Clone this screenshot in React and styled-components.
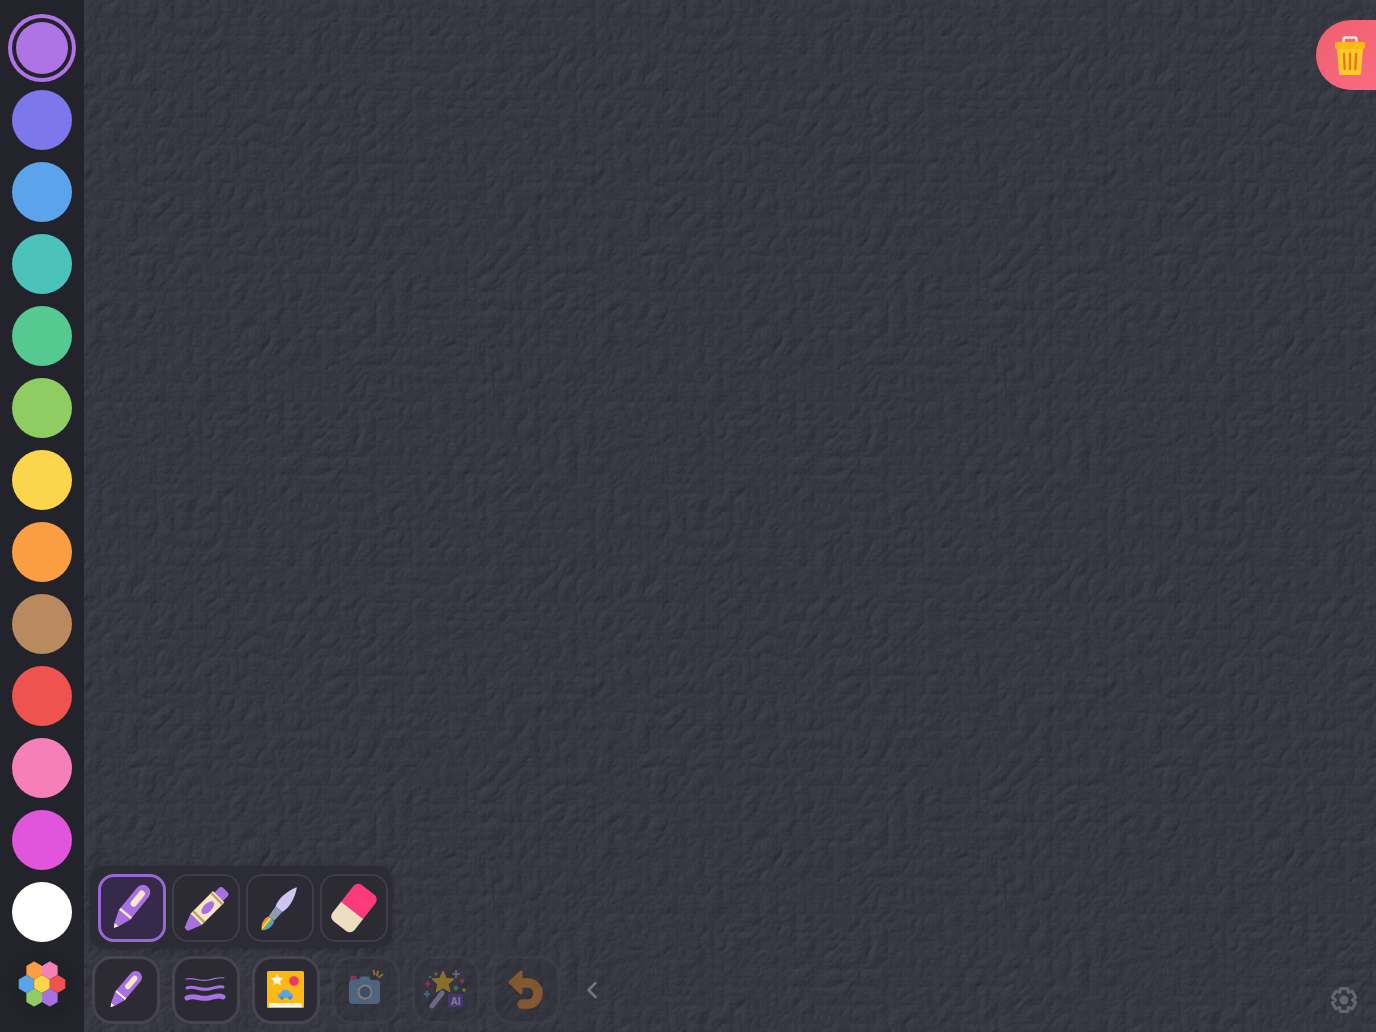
import styled, { createGlobalStyle } from "styled-components";
import { ChevronLeft } from "lucide-react";

const paper = `<svg xmlns='http://www.w3.org/2000/svg' width='512' height='512'><filter id='p' x='0' y='0' width='100%' height='100%' color-interpolation-filters='sRGB'><feTurbulence type='turbulence' baseFrequency='0.055' numOctaves='5' seed='9' stitchTiles='stitch'/><feDiffuseLighting surfaceScale='0.62' diffuseConstant='1' lighting-color='#fff'><feDistantLight azimuth='225' elevation='60'/></feDiffuseLighting><feColorMatrix type='matrix' values='0.5 0 0 0 -0.216 0 0.5 0 0 -0.214 0 0 0.5 0 -0.174 0 0 0 0 1'/></filter><rect width='512' height='512' filter='url(#p)'/></svg>`;

const GlobalStyle = createGlobalStyle`
  html, body {
    margin: 0;
    height: 100%;
    overflow: hidden;
    font-family: "Liberation Sans", Arial, sans-serif;
  }
`;

const Page = styled.div`
  display: flex;
  width: 100vw;
  height: 100vh;
  background: #23232b;
`;

const Sidebar = styled.aside`
  flex: 0 0 84px;
  display: flex;
  flex-direction: column;
  align-items: center;
  gap: 12px;
  padding-top: 18px;
  box-sizing: border-box;
  background: #23232b;
`;

const Swatch = styled.button`
  flex: 0 0 auto;
  width: ${(p) => (p.$selected ? "52px" : "60px")};
  height: ${(p) => (p.$selected ? "52px" : "60px")};
  margin: ${(p) => (p.$selected ? "4px" : "0")};
  padding: 0;
  border: none;
  border-radius: 50%;
  background: ${(p) => p.$color};
  box-shadow: ${(p) =>
    p.$selected ? `0 0 0 4px #23232b, 0 0 0 8px ${p.$color}` : "none"};
`;

const PaletteButton = styled.button`
  flex: 0 0 auto;
  display: flex;
  align-items: center;
  justify-content: center;
  width: 60px;
  height: 60px;
  padding: 0;
  border: none;
  border-radius: 50%;
  background: #212128;
  box-shadow: 0 2px 8px rgba(0, 0, 0, 0.12);
`;

const Canvas = styled.main`
  position: relative;
  flex: 1;
  background-color: #36363f;
  background-image: url("data:image/svg+xml,${encodeURIComponent(paper)}");
`;

const TrashButton = styled.button`
  position: absolute;
  top: 20px;
  right: 0;
  display: flex;
  align-items: center;
  justify-content: flex-end;
  width: 60px;
  height: 70px;
  padding: 0 10px 0 0;
  border: none;
  border-radius: 35px 0 0 35px;
  background: linear-gradient(135deg, #ee5f6f, #fb6b80);
`;

const SettingsButton = styled.button`
  position: absolute;
  right: 18px;
  bottom: 18px;
  display: flex;
  width: 28px;
  height: 28px;
  padding: 0;
  border: none;
  background: none;
  color: #62646f;
`;

const Dock = styled.div`
  position: absolute;
  left: 8px;
  bottom: 8px;
  display: flex;
  flex-direction: column;
  align-items: flex-start;
  gap: 8px;
`;

const IconButton = styled.button`
  display: flex;
  width: 68px;
  height: 68px;
  box-sizing: border-box;
  padding: 0;
  border-radius: 16px;
  border: ${(p) => (p.$active ? "3px solid #9a68d4" : "2px solid #3e3d48")};
  background: ${(p) => (p.$active ? "#352a4a" : "#2c2b34")};

  svg {
    flex: none;
    margin: ${(p) => (p.$active ? "-3px" : "-2px")};
  }
`;

const ActionButton = styled(IconButton)`
  border: 3px solid ${(p) => (p.$disabled ? "rgba(72, 72, 86, 0.45)" : "#45444f")};
  border-radius: 20px;
  background: ${(p) => (p.$disabled ? "rgba(46, 45, 54, 0.3)" : "#2c2b34")};

  svg {
    margin: -3px;
    opacity: ${(p) => (p.$disabled ? 0.42 : 1)};
  }
`;

const ToolPanel = styled.div`
  display: flex;
  gap: 6px;
  margin-left: -2px;
  padding: 8px 4px 6px 8px;
  border-radius: 14px;
  background: #2c2c35;
  box-shadow: 0 2px 8px rgba(0, 0, 0, 0.2);
`;

const ActionRow = styled.div`
  display: flex;
  align-items: center;
  gap: 12px;
`;

const CollapseButton = styled.button`
  display: flex;
  margin-left: 6px;
  padding: 0;
  border: none;
  background: none;
  color: #72747f;
`;

const Art = styled.svg.attrs({ width: 68, height: 68, viewBox: "0 0 68 68" })``;

const AiLabel = styled.text`
  font-family: "Liberation Sans", Arial, sans-serif;
  font-size: 10px;
  font-weight: 700;
  fill: #e6ddf8;
`;

function PenIcon({ x, y, scale, angle }) {
  return (
    <Art>
      <g transform={`translate(${x} ${y}) rotate(${angle}) scale(${scale})`}>
        <path d="M-7.500 -19.500a7.500 7.500 0 0 1 15 0V8H-7.500z" fill="#a970e2" />
        <rect x="-3.200" y="-21" width="6.400" height="19" rx="3.200" fill="#fbe8cf" />
        <rect x="-7.500" y="6.500" width="15" height="2.800" fill="#fbe8cf" />
        <path d="M-7.500 9.300H7.500L2.800 22H-2.800z" fill="#a970e2" />
        <path d="M-2.800 22H2.800L0 26.500z" fill="#fbe8cf" />
      </g>
    </Art>
  );
}

function CrayonIcon() {
  return (
    <Art>
      <g transform="translate(34 35.5) rotate(45)">
        <path d="M-6 -24a3 3 0 0 1 3 -3.5h6a3 3 0 0 1 3 3.5V-17H-6z" fill="#a970e2" />
        <rect x="-8" y="-18" width="16" height="32" fill="#f6e6bf" />
        <rect x="-8" y="-16.500" width="16" height="2.4" fill="#b9a36a" />
        <rect x="-8" y="9" width="16" height="2.4" fill="#b9a36a" />
        <ellipse cx="0" cy="-2.500" rx="4.200" ry="8" fill="#a970e2" />
        <path d="M-8 14H8L2.500 27.500Q0 29 -2.500 27.500z" fill="#a970e2" />
      </g>
    </Art>
  );
}

function BrushIcon() {
  const stripes = ["#e95050", "#f6993a", "#fbd64d", "#62bf6b", "#4aa3e8", "#9a68d4"];
  return (
    <Art>
      <defs>
        <clipPath id="bristles">
          <path d="M-3.500 13H3.500C6.500 17 5 24 0 28C-5 24 -6.500 17 -3.500 13z" />
        </clipPath>
      </defs>
      <g transform="translate(33.5 34.5) rotate(39)">
        <path d="M0 -27.5C3 -23 6 -14 5.800 -7C5.700 -3 5 -1 4.300 1H-4.300C-5 -1 -5.700 -3 -5.800 -7C-6 -14 -3 -23 0 -27.5z" fill="#cfc4f2" />
        <path d="M-4.300 1H4.300L3.500 13H-3.500z" fill="#8f9bb5" />
        <g clipPath="url(#bristles)">
          {stripes.map((color, i) => (
            <rect key={color} x={-6.5 + i * 2.2} y="12" width="2.3" height="17" fill={color} />
          ))}
        </g>
      </g>
    </Art>
  );
}

function EraserIcon() {
  return (
    <Art>
      <g transform="translate(34 34) rotate(38)">
        <path d="M-14 3V-17a6 6 0 0 1 6 -6H8a6 6 0 0 1 6 6V3z" fill="#fb3a7c" />
        <path d="M-14 3H14V17a6 6 0 0 1 -6 6H-8a6 6 0 0 1 -6 -6z" fill="#ecdcc0" />
      </g>
    </Art>
  );
}

function WavesIcon() {
  return (
    <Art fill="none" stroke="#a970e2" strokeLinecap="round">
      <path d="M14 23C22 21 28 26 37 24S47 21 52 22" strokeWidth="1.2" />
      <path d="M15 32C22 29 28 35 37 33S47 30 51 31" strokeWidth="3" />
      <path d="M15 42C22 38 28 44 37 42S47 39 51 41" strokeWidth="5" />
    </Art>
  );
}

function StickerIcon() {
  return (
    <Art>
      <rect x="15" y="15" width="37" height="37" rx="1.5" fill="#fdb813" />
      <path
        d="M25 17.5l1.9 3.9 4.3.6-3.1 3 .8 4.3-3.900-2-3.900 2 .8-4.300-3.100-3 4.300-.6z"
        fill="#fdf3d2"
      />
      <circle cx="42" cy="25" r="4.8" fill="#f0356e" />
      <path
        d="M27.500 42c-1.500 0-2-1.200-1.600-2.500.4-1.300 1.600-2.200 3.100-2.700.8-2.500 2.500-3.300 4.500-3.300s3.700.8 4.500 3.300c1.500.5 2.700 1.400 3.100 2.700.4 1.300-.1 2.500-1.600 2.500z"
        fill="#5aa6ee"
      />
      <circle cx="30" cy="42" r="1.800" fill="#3f86cf" />
      <circle cx="38" cy="42" r="1.800" fill="#3f86cf" />
      <rect x="17" y="47" width="33" height="4" rx="1" fill="#fff5dc" />
    </Art>
  );
}

function CameraIcon() {
  return (
    <Art>
      <rect x="18" y="20" width="7" height="5" rx="1.5" fill="#f0356e" />
      <path d="M17 28a4 4 0 0 1 4 -4h3l3-1 2-2.500h8l2 3.500h5a4 4 0 0 1 4 4v16a4 4 0 0 1 -4 4H21a4 4 0 0 1 -4 -4z" fill="#6fa8dc" />
      <circle cx="33" cy="36" r="6.500" fill="#4a6fa5" stroke="#f6d9a8" strokeWidth="2" />
      <g stroke="#fdc413" strokeWidth="2" strokeLinecap="round">
        <path d="M41.500 14.500l1 4" />
        <path d="M46 15.500l-1 4" />
        <path d="M50.500 18.500l-3.500 2.500" />
      </g>
    </Art>
  );
}

function WandIcon() {
  return (
    <Art>
      <path d="M30 37L20 50" stroke="#c3a7ee" strokeWidth="5" strokeLinecap="round" />
      <path
        d="M31 15l3.200 7.200 7.800.8-5.800 5.200 1.700 7.700-6.900-4-6.900 4 1.700-7.700-5.800-5.200 7.800-.8z"
        fill="#fdc413"
        stroke="#fdc413"
        strokeLinejoin="round"
      />
      <rect x="36" y="38" width="15" height="13" rx="1" fill="#5b3fb0" />
      <AiLabel x="43.500" y="48.500" textAnchor="middle">
        AI
      </AiLabel>
      <path d="M44 14v8M40 18h8" stroke="#c3a7ee" strokeWidth="1.500" />
      <path d="M16 25v6M13 28h6" stroke="#f0356e" strokeWidth="2" />
      <path d="M15 35v6M12 38h6" stroke="#4aa3e8" strokeWidth="2" />
      <circle cx="24" cy="18" r="1.800" fill="#8c8fa6" />
      <circle cx="18" cy="21" r="1.300" fill="#4aa3e8" />
      <circle cx="50" cy="25" r="2.200" fill="#f0356e" />
      <path d="M44 29l3 3-3 3-3-3z" fill="#35c26b" />
      <circle cx="52" cy="34" r="1.800" fill="#fdc413" />
    </Art>
  );
}

function UndoIcon() {
  return (
    <Art>
      <path d="M28 27H36a10 10.500 0 0 1 0 21H30" fill="none" stroke="#f08a1d" strokeWidth="9.500" strokeLinecap="round" />
      <path d="M18 26L29 16V37z" fill="#f08a1d" stroke="#f08a1d" strokeWidth="3" strokeLinejoin="round" />
    </Art>
  );
}

function TrashIcon() {
  return (
    <svg width="32" height="40" viewBox="0 0 32 40">
      <path d="M9.500 7V4.500a2 2 0 0 1 2 -2h9a2 2 0 0 1 2 2V7" fill="none" stroke="#f6e8df" strokeWidth="2.500" />
      <rect x="1" y="7" width="30" height="7" rx="1.500" fill="#fdb813" />
      <path d="M3 14H29L27 38a2 2 0 0 1 -2 2H7a2 2 0 0 1 -2 -2z" fill="#fdc82f" />
      <g stroke="#e07b16" strokeWidth="2.400" strokeLinecap="round">
        <path d="M10 19L10.700 34" />
        <path d="M16 19V34" />
        <path d="M22 19L21.300 34" />
      </g>
    </svg>
  );
}

const hexagons = [
  { dx: -7.8, dy: -13.6, color: "#fb9d42" },
  { dx: 7.8, dy: -13.6, color: "#f67fb8" },
  { dx: -15.5, dy: 0, color: "#5ba4ec" },
  { dx: 0, dy: 0, color: "#fbd64d" },
  { dx: 15.5, dy: 0, color: "#ef5350" },
  { dx: -7.8, dy: 13.6, color: "#8fcd63" },
  { dx: 7.8, dy: 13.6, color: "#a970e2" },
];

function HexPalette() {
  return (
    <svg width="60" height="60" viewBox="-30 -30 60 60">
      {hexagons.map((h) => (
        <path
          key={h.color}
          transform={`translate(${h.dx} ${h.dy})`}
          d="M0 -8.500L7.300 -4.300V4.300L0 8.500L-7.300 4.300V-4.300z"
          fill={h.color}
          stroke={h.color}
          strokeLinejoin="round"
        />
      ))}
    </svg>
  );
}

function GearIcon() {
  const outer = [];
  for (let i = 0; i < 6; i++) {
    const a = (Math.PI / 3) * i - Math.PI / 2;
    [-0.3, 0.3].forEach((d) => outer.push([12 * Math.cos(a + d), 12 * Math.sin(a + d)]));
    outer.push([8.6 * Math.cos(a + Math.PI / 6), 8.6 * Math.sin(a + Math.PI / 6)]);
  }
  return (
    <svg width="28" height="28" viewBox="-14 -14 28 28">
      <polygon
        points={outer.map((pt) => pt.join(",")).join(" ")}
        fill="none"
        stroke="currentColor"
        strokeWidth="3"
        strokeLinejoin="round"
      />
      <circle r="4.500" fill="currentColor" />
    </svg>
  );
}

const swatches = [
  "#ae73e4", "#7c78ec", "#5ba4ec", "#4bc2bb", "#55c98f", "#8fcd63", "#fbd64d",
  "#fb9d42", "#b98a5e", "#ef5350", "#f67fb8", "#e055dc", "#ffffff",
];

export default function App() {
  return (
    <Page>
      <GlobalStyle />
      <Sidebar>
        {swatches.map((color, i) => (
          <Swatch key={color} $color={color} $selected={i === 0} />
        ))}
        <PaletteButton>
          <HexPalette />
        </PaletteButton>
      </Sidebar>
      <Canvas>
        <TrashButton>
          <TrashIcon />
        </TrashButton>
        <Dock>
          <ToolPanel>
            <IconButton $active>
              <PenIcon x={32.5} y={33.5} scale={1} angle={39} />
            </IconButton>
            <IconButton>
              <CrayonIcon />
            </IconButton>
            <IconButton>
              <BrushIcon />
            </IconButton>
            <IconButton>
              <EraserIcon />
            </IconButton>
          </ToolPanel>
          <ActionRow>
            <ActionButton>
              <PenIcon x={33} y={34} scale={0.85} angle={40} />
            </ActionButton>
            <ActionButton>
              <WavesIcon />
            </ActionButton>
            <ActionButton>
              <StickerIcon />
            </ActionButton>
            <ActionButton $disabled>
              <CameraIcon />
            </ActionButton>
            <ActionButton $disabled>
              <WandIcon />
            </ActionButton>
            <ActionButton $disabled>
              <UndoIcon />
            </ActionButton>
            <CollapseButton>
              <ChevronLeft size={28} strokeWidth={2.2} />
            </CollapseButton>
          </ActionRow>
        </Dock>
        <SettingsButton>
          <GearIcon />
        </SettingsButton>
      </Canvas>
    </Page>
  );
}
